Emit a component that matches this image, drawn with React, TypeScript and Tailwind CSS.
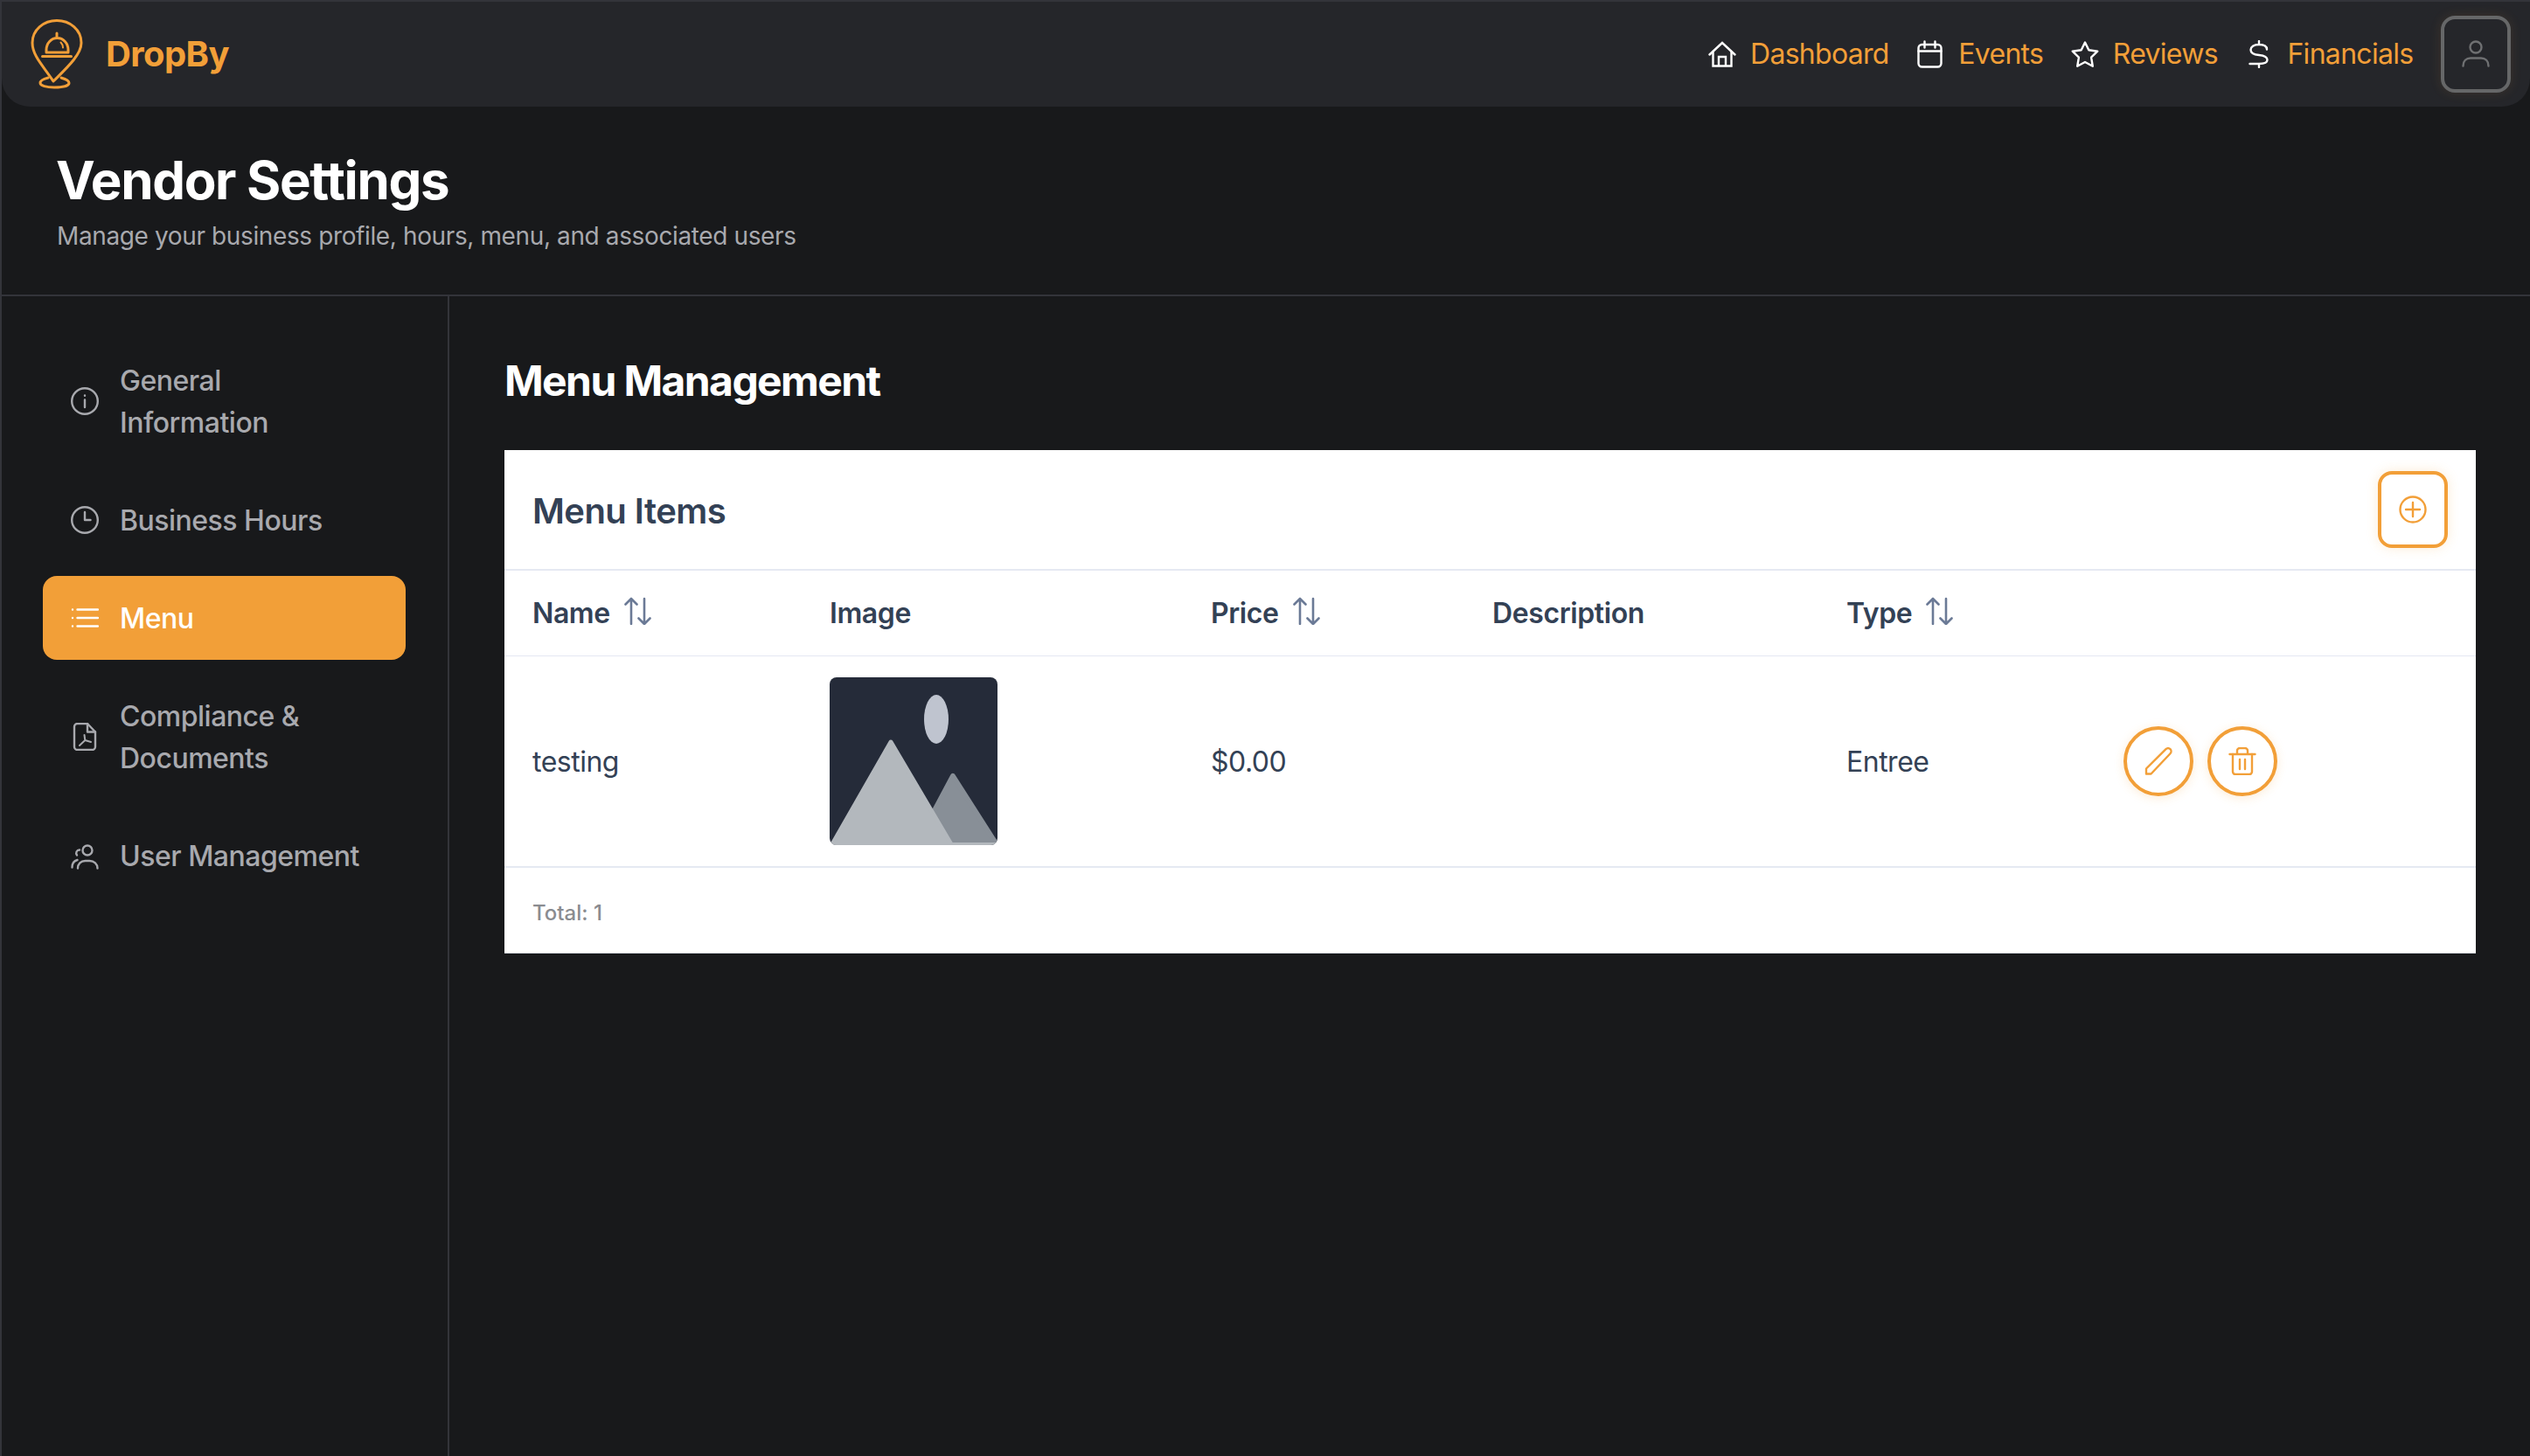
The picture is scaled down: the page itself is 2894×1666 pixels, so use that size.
const orange = "#f29f38";

function Icon({ children, className = "" }: { children: React.ReactNode; className?: string }) {
  return (
    <svg
      viewBox="0 0 32 32"
      fill="none"
      stroke="currentColor"
      strokeWidth={2.4}
      strokeLinecap="round"
      strokeLinejoin="round"
      className={`h-8 w-8 shrink-0 ${className}`}
    >
      {children}
    </svg>
  );
}

const HomeIcon = () => (
  <Icon className="text-white">
    <path d="M1.5 16.5 16 3l14.5 13.5" strokeLinejoin="miter" />
    <path d="M5.5 13v16.5h21V13M12 29.5V19h8v10.5" strokeLinejoin="miter" />
  </Icon>
);
const CalendarIcon = () => (
  <Icon className="text-white">
    <rect x="2.5" y="5" width="26" height="25.5" rx="4" />
    <path d="M2.5 12.5h26M9.5 1.5v7M21.5 1.5v7" />
  </Icon>
);
const StarIcon = () => (
  <Icon className="text-white">
    <path d="M16 2.5l4.3 8.8 10 1.4-7.2 7 1.7 10L16 25l-8.8 4.7 1.7-10-7.2-7 10-1.4z" />
  </Icon>
);
const DollarIcon = () => (
  <Icon className="text-white">
    <path d="M25 10.500C25 7 21.500 5 16 5 10 5 6.500 7.500 6.500 11c0 4 4 5.500 9.500 6 5.500.5 9.500 2 9.500 5.500 0 3-3.500 4.500-9.500 4.500H5.500M16 1v4M16 27v4" />
  </Icon>
);
const UserIcon = () => (
  <Icon className="text-[#6f7072]">
    <circle cx="16" cy="8" r="6.500" />
    <path d="M1.500 29.500C1.500 24 5 20.500 10 20.500h12c5 0 8.500 3.500 8.500 9" />
  </Icon>
);
const InfoIcon = () => (
  <Icon>
    <circle cx="16" cy="16" r="14.800" />
    <path d="M16 14.500V23M16 9.500v.2" />
  </Icon>
);
const ClockIcon = () => (
  <Icon>
    <circle cx="16" cy="16" r="14.800" />
    <path d="M16 7v9h6.500" />
  </Icon>
);
const ListIcon = () => (
  <Icon>
    <path d="M7.500 6.500H31M7.500 16H31M7.500 25.500H31M2 6.500v.1M2 16v.1M2 25.500v.1" />
  </Icon>
);
const PdfIcon = () => (
  <Icon>
    <path d="M7.500 1H19l9 9.500v17A3.500 3.500 0 0 1 24.500 31h-17A3.500 3.500 0 0 1 4 27.500v-23A3.500 3.500 0 0 1 7.500 1z" />
    <path d="M19 1v9.500h9" />
    <path d="M15.500 14l.8 6-6.300 6M16.300 20l6.700 2" strokeWidth={2} />
  </Icon>
);
const UsersIcon = () => (
  <Icon>
    <circle cx="19" cy="10" r="5.500" />
    <path d="M8 30.500C8 25.500 11.500 22 16.500 22h5c5 0 9 3.500 9 8.500" />
    <path d="M10 9.500A3.700 3.700 0 0 0 7 15.500M1.500 29.500C1.500 25 3.500 22 7.500 21" />
  </Icon>
);

const SortIcon = () => (
  <svg
    viewBox="0 0 32 32"
    fill="none"
    stroke="#6b7a96"
    strokeWidth={2.600}
    strokeLinecap="round"
    strokeLinejoin="round"
    className="ml-4 h-8 w-8 shrink-0 -translate-y-[3px]"
  >
    <path d="M8 2v29M1.500 8.500 8 2l6.500 6.500M23 2v29M16.500 24.500 23 31l6.500-6.500" />
  </svg>
);

function Logo() {
  return (
    <svg viewBox="33 19 64 84" fill="none" stroke={orange} strokeWidth={3} strokeLinecap="round" strokeLinejoin="round" className="h-[84px] w-16 shrink-0">
      <path d="M61 92C50 75 37 63 37 48c0-15 13-25.500 28-25.500S93 33 93 48c0 14-18 30-32 44z" />
      <path d="M55 88c-6 1.500-9 3.500-9 6 0 3 7 5 16 5 10 0 17-2 17-5 0-2.500-4-4.500-9-6" />
      <path d="M53 59v-3a12.500 13.500 0 0 1 25 0v3zM65 37v5M48.500 63.500h33" />
      <path d="M69.500 47.500c1.500 1.500 2.500 3.500 2.500 6" strokeWidth={2} />
    </svg>
  );
}

function Thumbnail() {
  return (
    <svg viewBox="0 0 192 192" className="block h-48 w-48 rounded-lg">
      <rect width="192" height="192" fill="#252b39" />
      <ellipse cx="122" cy="48" rx="14" ry="28" fill="#bfc4cf" />
      <path d="M141 115 190 192H100z" fill="#888f97" stroke="#888f97" strokeWidth="6" strokeLinejoin="round" transform="translate(0 -2)" />
      <path d="M70 75 139 192H3z" fill="#b3b8bd" stroke="#b3b8bd" strokeWidth="5" strokeLinejoin="round" transform="translate(0 -1)" />
      <rect y="189" width="192" height="3" fill="#b3b8bd" x="3" />
    </svg>
  );
}

const navLinks = [
  { label: "Dashboard", icon: <HomeIcon /> },
  { label: "Events", icon: <CalendarIcon /> },
  { label: "Reviews", icon: <StarIcon /> },
  { label: "Financials", icon: <DollarIcon /> },
];

const sideItems = [
  { label: "General Information", icon: <InfoIcon /> },
  { label: "Business Hours", icon: <ClockIcon /> },
  { label: "Menu", icon: <ListIcon />, active: true },
  { label: "Compliance & Documents", icon: <PdfIcon /> },
  { label: "User Management", icon: <UsersIcon /> },
];

const thClass = "border-b border-[#e5e7f3] pl-8 text-left text-[32px] font-semibold tracking-[-0.4px] text-[#334155]";
const cellClass = "border-b-2 border-[#e5e9f2] px-8 text-[32px] leading-12 font-normal tracking-[-0.5px] text-[#334155]";
const tdClass = `${cellClass} pt-[25px] pb-[23px]`;
const mediaTdClass = `${cellClass} py-6`;

export default function App() {
  return (
    <div className="flex min-h-screen flex-col border-t-2 border-l-2 border-[#33343a] bg-[#18191b] font-['Inter',sans-serif]">
      <header className="flex h-[120px] items-center justify-between rounded-b-[32px] bg-[#25262a] pr-[22px] pl-[31px]">
        <div className="flex items-center gap-6">
          <Logo />
          <span className="text-[40px] leading-none font-bold tracking-[-0.6px] text-[#f29f38]">DropBy</span>
        </div>
        <nav className="flex items-center gap-[31.5px]">
          {navLinks.map((l) => (
            <a key={l.label} className="flex items-center gap-4 text-[32px] leading-12 tracking-[-0.7px] text-[#f29f38]">
              {l.icon}
              {l.label}
            </a>
          ))}
          <button className="flex h-[88px] w-[80px] items-center justify-center rounded-2xl border-4 border-[#666768] shadow-[0_0_14px_rgba(242,159,56,0.12)]">
            <UserIcon />
          </button>
        </nav>
      </header>

      <div className="border-b-2 border-[#33343a] pt-12 pb-[47px] pl-[62px]">
        <h1 className="text-[60px] leading-[72px] font-bold tracking-[-1.35px] text-white">Vendor Settings</h1>
        <p className="mt-2 pl-px text-[28px] leading-10 tracking-[-0.38px] text-[#a8a9ae]">
          Manage your business profile, hours, menu, and associated users
        </p>
      </div>

      <div className="flex flex-1">
        <aside className="w-[512px] shrink-0 border-r-2 border-[#33343a] pt-12 pr-[48px] pl-[47px]">
          <ul className="flex flex-col gap-4">
            {sideItems.map((s) => (
              <li
                key={s.label}
                className={`flex items-center gap-6 rounded-2xl px-8 py-6 text-[32px] leading-12 font-medium tracking-[-0.5px] ${
                  s.active ? "bg-[#f29f38] text-white" : "text-[#a8a9ae]"
                }`}
              >
                {s.icon}
                <span className="max-w-[280px] translate-y-px">{s.label}</span>
              </li>
            ))}
          </ul>
        </aside>

        <main className="flex-1 pt-16 pr-[62px] pl-[63px]">
          <h2 className="mt-px mb-[47px] text-[48px] leading-16 font-bold tracking-[-1.6px] text-white">Menu Management</h2>
          <section className="border-b border-[#e2e8f0] bg-white">
            <div className="flex items-center justify-between border-b-2 border-[#e5e9f2] py-6 pr-8 pl-8">
              <h3 className="translate-y-[2px] text-[40px] leading-12 font-semibold tracking-[-0.55px] text-[#334155]">Menu Items</h3>
              <button className="flex h-[88px] w-[80px] items-center justify-center rounded-2xl border-4 border-[#f29f38] text-[#f29f38] shadow-[0_0_14px_rgba(242,159,56,0.2)]">
                <Icon>
                  <circle cx="16" cy="16" r="14.500" />
                  <path d="M16 8v16M8 16h16" />
                </Icon>
              </button>
            </div>
            <table className="w-full table-fixed border-separate border-spacing-0">
              <thead>
                <tr className="h-[98px]">
                  <th className={`${thClass} w-[340px]`}>
                    <span className="flex items-center">Name<SortIcon /></span>
                  </th>
                  <th className={`${thClass} w-[436px]`}>Image</th>
                  <th className={`${thClass} w-[322px]`}>
                    <span className="flex items-center">Price<SortIcon /></span>
                  </th>
                  <th className={`${thClass} w-[405px]`}>Description</th>
                  <th className={`${thClass} w-[349px]`}>
                    <span className="flex items-center">Type<SortIcon /></span>
                  </th>
                  <th className={thClass} />
                </tr>
              </thead>
              <tbody>
                <tr>
                  <td className={tdClass}>testing</td>
                  <td className={mediaTdClass}><Thumbnail /></td>
                  <td className={tdClass}>$0.00</td>
                  <td className={tdClass} />
                  <td className={tdClass}>Entree</td>
                  <td className={`${mediaTdClass} !pl-0`}>
                    <div className="flex gap-4">
                      <button className="flex h-20 w-20 items-center justify-center rounded-full border-4 border-[#f29f38] text-[#f29f38] shadow-[0_2px_12px_rgba(242,159,56,0.2)]">
                        <Icon>
                          <path d="M2 30.500v-6L24.500 2.200a3.500 3.500 0 0 1 5 5L7.500 30.500z" />
                        </Icon>
                      </button>
                      <button className="flex h-20 w-20 items-center justify-center rounded-full border-4 border-[#f29f38] text-[#f29f38] shadow-[0_2px_12px_rgba(242,159,56,0.2)]">
                        <Icon>
                          <path d="M1.500 8h29M10 8V4a3 3 0 0 1 3-3h6a3 3 0 0 1 3 3v4" />
                          <path d="M5 8v20a3 3 0 0 0 3 3h16a3 3 0 0 0 3-3V8M13 14v11M19 14v11" />
                        </Icon>
                      </button>
                    </div>
                  </td>
                </tr>
              </tbody>
            </table>
            <div className="flex h-[97px] items-center pt-[6px] pl-8 text-[24px] font-medium text-[#8a8c90]">Total: 1</div>
          </section>
        </main>
      </div>
    </div>
  );
}
